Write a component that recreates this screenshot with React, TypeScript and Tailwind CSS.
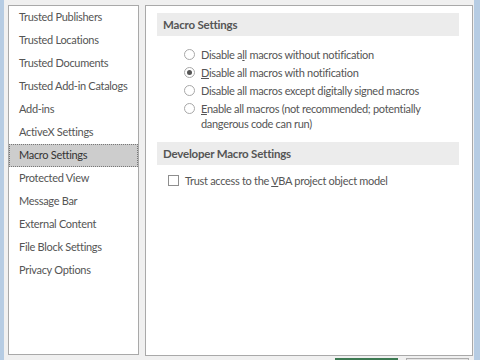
import React from "react";

const categories = [
  "Trusted Publishers",
  "Trusted Locations",
  "Trusted Documents",
  "Trusted Add-in Catalogs",
  "Add-ins",
  "ActiveX Settings",
  "Macro Settings",
  "Protected View",
  "Message Bar",
  "External Content",
  "File Block Settings",
  "Privacy Options",
];

function Radio({ checked }: { checked?: boolean }) {
  return (
    <span className="mt-[2px] flex h-[11px] w-[11px] shrink-0 items-center justify-center rounded-full border border-[#a8a8a8] bg-white">
      {checked && <span className="h-[5px] w-[5px] rounded-full bg-[#555]" />}
    </span>
  );
}

function Section({ title }: { title: string }) {
  return (
    <div className="flex h-[23px] items-center bg-[#ececec] pl-[6px] text-[11.5px] font-bold tracking-[-0.2px] text-[#555]">
      {title}
    </div>
  );
}

export default function App() {
  return (
    <div
      className="flex h-[360px] w-[480px] overflow-hidden bg-[#f0f0f0] text-[#555]"
      style={{ fontFamily: "Lato, 'Liberation Sans', sans-serif" }}
    >
      {/* window edge */}
      <div className="h-full w-[4px] shrink-0 bg-[#b6cce3]" />

      {/* category list */}
      <div className="ml-[4px] mt-[5px] h-[350px] w-[131px] shrink-0 border border-[#a9a9a9] bg-white">
        {categories.map((c) => (
          <div
            key={c}
            className={
              c === "Macro Settings"
                ? "flex h-[23px] items-center whitespace-nowrap border border-dotted border-[#777] bg-[#cdcdcd] pl-[9px] text-[11px] tracking-[-0.3px] text-[#333]"
                : "flex h-[23px] items-center whitespace-nowrap pl-[10px] text-[11px] tracking-[-0.3px]"
            }
          >
            {c}
          </div>
        ))}
      </div>

      {/* settings */}
      <div className="ml-[6px] mt-[5px] flex shrink-0 flex-col">
        <div className="h-[351px] w-[328px] shrink-0 border border-[#a9a9a9] bg-white pl-[11px] pr-[13px] pt-[7px]">
          <Section title="Macro Settings" />
          <div className="ml-[27px] mt-[11px] flex flex-col gap-[3px] text-[11px] leading-[15px] tracking-[-0.3px]">
            <div className="flex gap-[6px]">
              <Radio />
              <span>
                Disable a<span className="underline">l</span>l macros without notification
              </span>
            </div>
            <div className="flex gap-[6px]">
              <Radio checked />
              <span>
                <span className="underline">D</span>isable all macros with notification
              </span>
            </div>
            <div className="flex gap-[6px]">
              <Radio />
              <span>
                Disable all macros except di<span className="underline">g</span>itally signed macros
              </span>
            </div>
            <div className="flex gap-[6px]">
              <Radio />
              <span className="w-[232px]">
                <span className="underline">E</span>nable all macros (not recommended; potentially
                dangerous code can run)
              </span>
            </div>
          </div>

          <div className="mt-[11px]">
            <Section title="Developer Macro Settings" />
          </div>
          <div className="ml-[11px] mt-[8px] flex items-center gap-[6px] text-[11px] leading-[15px] tracking-[-0.3px]">
            <span className="h-[11px] w-[11px] shrink-0 border border-[#8e8e8e] bg-white" />
            <span>
              Trust access to the <span className="underline">V</span>BA project object model
            </span>
          </div>
        </div>
        <div className="mt-[2px] flex gap-[8px] pl-[190px]">
          <div className="h-[20px] w-[63px] shrink-0 border-t-[3px] border-[#3c7a52] bg-[#e5e5e5]" />
          <div className="h-[20px] w-[63px] shrink-0 border border-[#adadad] bg-[#e5e5e5]" />
        </div>
      </div>

      <div className="ml-[1px] h-full w-[7px] shrink-0 bg-[#b6cce3]" />
    </div>
  );
}
